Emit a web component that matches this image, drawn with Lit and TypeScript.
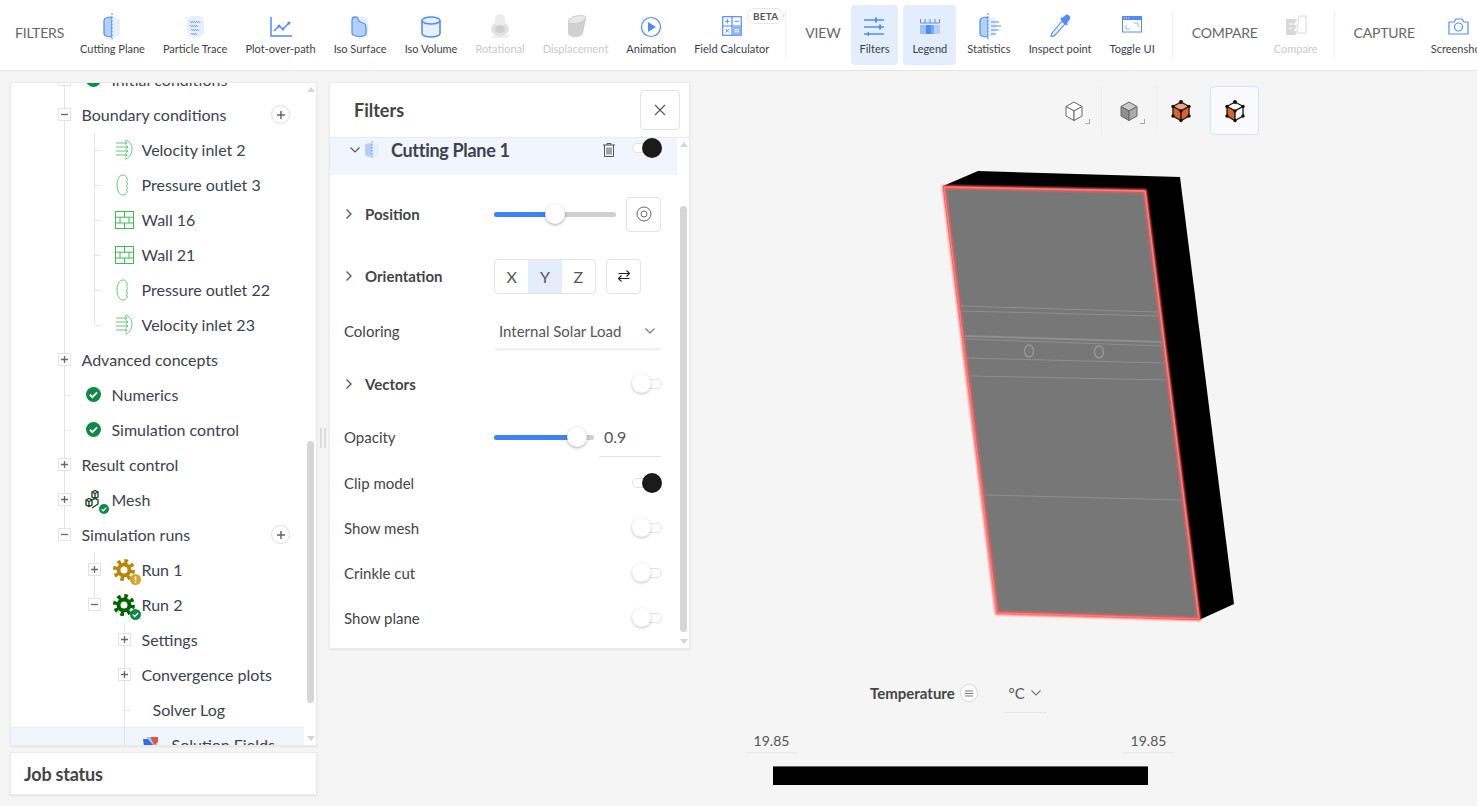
import { LitElement, html, css, svg } from "lit";
import { customElement } from "lit/decorators.js";

const B = "#4f8cf7";
const L = "#b5cffb";
const P = "#e6effe";

const cyl = (inner: any) => html`<svg width="28" height="30" viewBox="0 0 28 30">${inner}</svg>`;

const toolIcons: Record<string, any> = {
  cut: cyl(svg`<path d="M14 6c-5 0-8 1.500-8 3.500v13c0 2 3 3.500 8 3.500z" fill="${L}" stroke="${B}" stroke-width="1.200"/><path d="M14 6c5 0 8 1.500 8 3.500v13c0 2-3 3.500-8 3.500z" fill="${P}"/><path d="M14 2v27" stroke="${B}" stroke-width="1" stroke-dasharray="2 1.500"/>`),
  particle: cyl(svg`<rect x="6" y="5" width="17" height="21" rx="6" fill="${P}"/><path d="M9 11c1-2 1 2 2 0s1 2 2 0 1 2 2 0 1 2 2 0 1 2 2 0M9 15c1-2 1 2 2 0s1 2 2 0 1 2 2 0 1 2 2 0M10 19c1-2 1 2 2 0s1 2 2 0 1 2 2 0 1 2 2 0M10 23c1-2 1 2 2 0s1 2 2 0 1 2 2 0" fill="none" stroke="${B}" stroke-width=".9"/>`),
  plot: cyl(svg`<path d="M4 6v19h21" fill="none" stroke="${B}" stroke-width="1.500"/><path d="M7 20l5-5 4 3 6-6" fill="none" stroke="${B}" stroke-width="1.500"/><circle cx="12" cy="15" r="1.500" fill="${B}"/><circle cx="16" cy="18" r="1.500" fill="${B}"/><circle cx="22" cy="12" r="1.500" fill="${B}"/>`),
  isos: cyl(svg`<path d="M6 9c0-2 3-3.500 8-3.500s8 1.500 8 3.500v13c0 2-3 3.500-8 3.500s-8-1.500-8-3.500z" fill="${P}"/><path d="M6 9c0-4 6-4 6-1 0 2 2 3 5 4s3 3 3 6v5c-1 2-4 2.500-6 2.500-5 0-8-1.500-8-3.500z" fill="${L}" stroke="${B}" stroke-width="1.200"/>`),
  isov: cyl(svg`<path d="M5 9.500c0-2 4-3.500 9-3.500s9 1.500 9 3.500v13c0 2-4 3.500-9 3.500s-9-1.500-9-3.500z" fill="${P}" stroke="${B}" stroke-width="1.600"/><path d="M5 9.500c0 2 4 3.500 9 3.500s9-1.500 9-3.500" fill="none" stroke="${B}" stroke-width="1.600"/>`),
  rot: cyl(svg`<path d="M8 24h16l-3 3H5z" fill="#eee"/><ellipse cx="14" cy="18" rx="9" ry="7" fill="#e2e2e2"/><rect x="9" y="3" width="10" height="13" rx="5" fill="#ececec"/><ellipse cx="14" cy="18" rx="5" ry="4" fill="#cfcfcf"/>`),
  disp: cyl(svg`<path d="M6 9l13-4c3-.500 5 1 5 3l-3 14c-.500 2-3 4-8 4-4 0-7-1.500-7-4z" fill="#d0d0d0"/><ellipse cx="15" cy="8.500" rx="9" ry="3.500" transform="rotate(-14 15 8.500)" fill="#e8e8e8" stroke="#cfcfcf"/>`),
  anim: cyl(svg`<circle cx="14" cy="16" r="9.500" fill="#fff" stroke="${B}" stroke-width="1.200"/><path d="M11 11l8 5-8 5z" fill="${B}"/>`),
  calc: html`<svg width="20" height="20" viewBox="0 0 20 20"><rect x=".7" y=".7" width="18.600" height="18.600" fill="#fff" stroke="${B}" stroke-width="1.200"/><path d="M10 .7v18.600M.7 10h18.600" stroke="${B}" stroke-width="1.200"/><rect x="10" y="10" width="9.300" height="9.300" fill="#8fb6f9"/><path d="M3 5.300h4.500M5.300 3v4.500M12.500 5.300h4.500M3.500 13l3.500 3.500M7 13l-3.500 3.500" stroke="${B}" stroke-width="1"/><path d="M12.500 13.800h4.500M12.500 15.800h4.500" stroke="#fff" stroke-width="1"/></svg>`,
  filt: cyl(svg`<path d="M4 9h20M4 16h20M4 23h20" stroke="${B}" stroke-width="1.400"/><path d="M15 6.500h2v5h-2zM19 13.500h2v5h-2z" fill="${B}"/><path d="M9 20.500l-3 2.500 3 2.500z" fill="${B}"/>`),
  leg: cyl(svg`<path d="M4.500 8v4h19V8M9 8v4M14 8v4M19 8v4" fill="none" stroke="${B}" stroke-width="1"/><rect x="4" y="14" width="6" height="9" fill="#9dbffa"/><rect x="10" y="14" width="5" height="9" fill="${B}"/><rect x="15" y="14" width="3" height="9" fill="#7ba8f9"/><rect x="18" y="14" width="6" height="9" fill="${L}"/>`),
  stat: cyl(svg`<path d="M13 6c-5 0-8 1.500-8 3.500v13c0 2 3 3.500 8 3.500z" fill="${L}" stroke="${B}" stroke-width="1.200"/><path d="M13 6c4 0 7 1 8 3v14c-1 2-4 3-8 3z" fill="${P}"/><path d="M13 2v27" stroke="${B}" stroke-dasharray="2 1.500"/><path d="M16 11h8M16 15h10M16 19h8M16 23h5" stroke="${B}" stroke-width="1"/>`),
  insp: cyl(svg`<path d="M16 10l3 3-10 11c-1 1-3 1.500-4 1.500 0-1 .500-3 1.500-4z" fill="${P}" stroke="${B}" stroke-width="1.100"/><path d="M14.500 8.500l6 6 1.500-1.500-1-1 2.500-3c1.500-2 .500-3.500-.500-4.500s-2.500-1.500-4 0l-3 2.500-1-1z" fill="${B}"/>`),
  tog: cyl(svg`<rect x="4.500" y="5.500" width="19" height="15.500" fill="#fff" stroke="${B}" stroke-width="1"/><rect x="4" y="5" width="20" height="4" fill="${B}"/><path d="M6 7h1M8 7h1M10 7h1" stroke="#fff"/><path d="M8 14v4h4M16 12h4v4" fill="none" stroke="#8fb6f9"/>`),
  comp: cyl(svg`<path d="M4 8h11l-3 6h3l-3 6h3l-2 4H4z" fill="#d8d8d8"/><path d="M17 5h7v17H15z" fill="#fff" stroke="#d8d8d8"/><path d="M7 13h4M7 17h3M18 10h4M17 14h5" stroke="#fff"/>`),
  cam: cyl(svg`<path d="M5 11h5l2-3h6l2 3h4a1 1 0 0 1 0 0v12H5z" fill="#fff" stroke="${B}" stroke-width="1.200" stroke-linejoin="round"/><circle cx="14.500" cy="16" r="4" fill="none" stroke="${B}" stroke-width="1.200"/>`),
};

const G = "#62c878";
const velocity = html`<svg width="24" height="22" viewBox="0 0 24 22"><path d="M4 4h11M4 8h12M4 12h12M4 16h11M13 2.500l2 1.500-2 1.500M14 6.500l2 1.500-2 1.500M14 10.500l2 1.500-2 1.500M13 14.500l2 1.500-2 1.500" fill="none" stroke="${G}"/><path d="M13 1c5 1 7 5 7 9s-2 9-7 10" fill="none" stroke="${G}"/></svg>`;
const pressure = html`<svg width="24" height="22" viewBox="0 0 24 22"><path d="M11 1c-4 0-6 5-6 10s2 10 6 10c2 0 3-1 3.500-2l1-1-1-2 1-2-1-2 1-2.500-1-2 1-2-1-2.500C13.800 2 13 1 11 1z" fill="none" stroke="${G}"/></svg>`;
const wall = html`<svg width="24" height="22" viewBox="0 0 24 22"><rect x="3.500" y="2.500" width="18" height="17" fill="none" stroke="#3fbb55"/><path d="M3.500 8.200h18M3.500 14h18M12.500 2.500v5.700M8 8.200V14M17 8.200V14M12.500 14v5.500" stroke="#3fbb55" fill="none"/></svg>`;
const check = (size = 16) => html`<svg width=${size} height=${size} viewBox="0 0 16 16"><circle cx="8" cy="8" r="8" fill="#0f8a46"/><path d="M4.200 8.200l2.600 2.600 5-5" fill="none" stroke="#fff" stroke-width="2"/></svg>`;
const okIcon = html`<span class="ok">${check(15)}</span>`;
const mesh = html`<span class="badged"><svg width="22" height="22" viewBox="0 0 22 22"><path d="M9 3l3-1.500 3 1.500v5l-3 1.500L9 8zM9 3l3 1.500 3-1.500M12 4.500v5M3 11l3-1.500L9 11v5l-3 1.500L3 16zM3 11l3 1.500L9 11M6 12.500v5M9 11l3-1.500 3 1.500v4l-6 4" fill="none" stroke="#143d20" stroke-width="1.300"/></svg><i class="bdg">${check(10)}</i></span>`;
const gear = (c: string, badge: any) => html`<span class="badged"><svg width="22" height="22" viewBox="0 0 22 22"><circle cx="11" cy="11" r="9" fill="none" stroke=${c} stroke-width="4" stroke-dasharray="3.500 3.570"/><circle cx="11" cy="11" r="5.500" fill="none" stroke=${c} stroke-width="4"/></svg><i class="bdg big">${badge}</i></span>`;
const warn = html`<svg width="11" height="11" viewBox="0 0 16 16"><circle cx="8" cy="8" r="8" fill="#d4a42c"/><path d="M8 3.500v5.500M8 11v2" stroke="#fff" stroke-width="2.400"/></svg>`;
const sol = html`<svg width="18" height="18" viewBox="0 0 18 18"><path d="M1 3h7l4 7-3 7-7-7z" fill="#2f6fe0"/><path d="M8 1h8v5l-4 4z" fill="#e2563a"/><path d="M4 1h4l6 11-2 5-1-8z" fill="#a3c4f7"/><path d="M12 8l5 1-3 8h-3z" fill="#e58b55"/></svg>`;

type Row = { t: string; l: number; box?: string; icon?: any; add?: boolean; g: string[]; hl?: boolean };
const f1 = "g1";
const rows: Row[] = [
  { t: "Initial conditions", l: 1, box: "+", icon: okIcon, g: [f1] },
  { t: "Boundary conditions", l: 1, box: "-", add: true, g: [f1] },
  { t: "Velocity inlet 2", l: 2, icon: velocity, g: [f1, "g2", "t2"] },
  { t: "Pressure outlet 3", l: 2, icon: pressure, g: [f1, "g2", "t2"] },
  { t: "Wall 16", l: 2, icon: wall, g: [f1, "g2", "t2"] },
  { t: "Wall 21", l: 2, icon: wall, g: [f1, "g2", "t2"] },
  { t: "Pressure outlet 22", l: 2, icon: pressure, g: [f1, "g2", "t2"] },
  { t: "Velocity inlet 23", l: 2, icon: velocity, g: [f1, "g2 half", "t2"] },
  { t: "Advanced concepts", l: 1, box: "+", g: [f1] },
  { t: "Numerics", l: 1, icon: okIcon, g: [f1, "t1"] },
  { t: "Simulation control", l: 1, icon: okIcon, g: [f1, "t1"] },
  { t: "Result control", l: 1, box: "+", g: [f1] },
  { t: "Mesh", l: 1, box: "+", icon: mesh, g: [f1] },
  { t: "Simulation runs", l: 1, box: "-", add: true, g: ["g1 half"] },
  { t: "Run 1", l: 2, box: "+", icon: gear("#b8860b", warn), g: ["g2"] },
  { t: "Run 2", l: 2, box: "-", icon: gear("#006400", check(11)), g: ["g2 half"] },
  { t: "Settings", l: 3, box: "+", g: ["g3"] },
  { t: "Convergence plots", l: 3, box: "+", g: ["g3"] },
  { t: "Solver Log", l: 3, g: ["g3", "t3"] },
  { t: "Solution Fields", l: 3, icon: sol, g: ["g3", "t3"], hl: true },
];

const tools1 = [
  ["cut", "Cutting Plane"], ["particle", "Particle Trace"], ["plot", "Plot-over-path"], ["isos", "Iso Surface"],
  ["isov", "Iso Volume"], ["rot", "Rotational", "off"], ["disp", "Displacement", "off"], ["anim", "Animation"],
];

@customElement("app-root")
export class AppRoot extends LitElement {
  static styles = css`
    :host { display: block; width: 1477px; height: 806px; overflow: hidden; background: #f5f5f5; font-family: Lato, "Open Sans", sans-serif; color: #444; }
    svg { display: block; }
    .toolbar { height: 70px; background: #fff; border-bottom: 1px solid #e4e4e4; display: flex; align-items: flex-start; padding-left: 15px; box-sizing: content-box; white-space: nowrap; overflow: hidden; }
    .glabel { flex: none; font-size: 14px; line-height: 20px; margin-top: 23px; color: #666; letter-spacing: -.2px; }
    .tool { flex: none; position: relative; height: 60px; margin-top: 5px; padding: 0 9px; box-sizing: border-box; display: flex; flex-direction: column; align-items: center; border-radius: 4px; color: #3a3f4a; font-size: 11px; }
    .tool .ic { height: 30px; margin-top: 6px; display: flex; align-items: center; justify-content: center; }
    .tool .tx { line-height: 16px; margin-top: 0; }
    .tool.off { color: #c9c9c9; }
    .tool.on { background: #e3edfb; }
    .beta { position: absolute; top: 3px; right: -6px; height: 14px; padding: 0 5px; border: 1px solid #e6e6e6; border-radius: 8px; background: #fff; font-size: 10px; line-height: 14px; color: #555; font-weight: 700; letter-spacing: .2px; }
    .sep { flex: none; width: 1px; height: 48px; background: #eee; margin-top: 10px; }
    .main { display: flex; align-items: flex-start; padding: 11px 0 0 10px; }
    .left { flex: none; width: 307px; display: flex; flex-direction: column; gap: 6px; }
    .card { background: #fff; border: 1px solid #eaeaea; box-shadow: 0 1px 2px rgba(0,0,0,.08); box-sizing: border-box; }
    .tree-card { height: 664px; display: flex; overflow: hidden; }
    .tree { flex: none; width: 293px; height: 100%; overflow: hidden; }
    .tree-in { margin-top: -21px; }
    .row { position: relative; height: 35px; display: flex; align-items: center; box-sizing: border-box; font-size: 16px; color: #3c4250; white-space: nowrap; }
    .row.hl { background: #f1f5fd; box-shadow: inset 0 1px 0 #e3ebf8; }
    .box { flex: none; width: 24px; display: flex; position: relative; z-index: 1; }
    .box i { width: 11px; height: 11px; border: 1px solid #e2e2e2; background: #fff; display: flex; align-items: center; justify-content: center; font-style: normal; }
    .box svg { width: 7px; height: 7px; }
    .iconslot { flex: none; width: 30px; display: flex; }
    .iconslot > * { flex: none; }
    .ok { width: 24px; display: flex; justify-content: center; }
    .badged { position: relative; display: block; width: 24px; height: 22px; }
    .badged svg { margin-left: 1px; }
    .bdg { position: absolute; right: -3px; bottom: -3px; width: 10px; height: 10px; }
    .bdg svg { margin: 0; }
    .bdg.big { width: 11px; height: 11px; right: -5px; bottom: -4px; }
    .add { margin-left: auto; margin-right: 14px; width: 17px; height: 17px; border: 1px solid #dedede; border-radius: 50%; display: flex; align-items: center; justify-content: center; background: #fff; }
    .add svg { width: 8px; height: 8px; }
    .g { position: absolute; width: 1px; background: #e4e4e4; top: 0; bottom: 0; }
    .g1 { left: 53px; } .g2 { left: 83px; } .g3 { left: 113px; }
    .g.half { bottom: 50%; }
    .t { position: absolute; top: 50%; height: 1px; width: 6px; background: #e8e8e8; }
    .t1 { left: 54px; } .t2 { left: 84px; } .t3 { left: 114px; }
    .sb { flex: none; width: 13px; position: relative; display: flex; flex-direction: column; align-items: center; }
    .up, .down { position: absolute; width: 0; height: 0; border-left: 4px solid transparent; border-right: 4px solid transparent; }
    .up { top: 4px; border-bottom: 5px solid #d4d4d4; }
    .down { bottom: 4px; border-top: 5px solid #d4d4d4; }
    .thumb { width: 7px; background: #d6d6d6; border-radius: 4px; }
    .job { height: 43px; padding-left: 13px; font-size: 18px; font-weight: 700; color: #444; line-height: 42px; letter-spacing: -.2px; }
    .gutter { flex: none; width: 12px; height: 712px; display: flex; align-items: center; justify-content: center; gap: 2px; }
    .gutter i { width: 2px; height: 20px; background: #dcdcdc; }
    .panel { flex: none; width: 361px; height: 567px; display: flex; flex-direction: column; }
    .phead { flex: none; height: 55px; border-bottom: 1px solid #e6eaf2; display: flex; align-items: center; padding: 0 9px 0 24px; justify-content: space-between; box-sizing: border-box; }
    .phead h2 { margin: 0; font-size: 18px; font-weight: 700; color: #444; }
    .closeb { width: 40px; height: 40px; border: 1px solid #e2e2e2; border-radius: 4px; box-sizing: border-box; display: flex; align-items: center; justify-content: center; }
    .pbody { flex: 1; display: flex; min-height: 0; }
    .pmain { flex: none; width: 347px; }
    .cprow { height: 37px; background: #f1f5fd; display: flex; align-items: flex-start; padding: 0 15px 0 19px; box-sizing: border-box; }
    .cprow > * { height: 24px; display: flex; align-items: center; flex: none; }
    .cpchev { width: 15px; }
    .cpic { width: 27px; }
    .cpname { font-size: 18px; font-weight: 700; color: #3c4250; letter-spacing: -.3px; }
    .trash { margin-left: auto; margin-right: 16px; }
    .frow { display: flex; align-items: center; padding: 0 15px 0 14px; font-size: 15px; color: #444; }
    .h36 { height: 36px; } .h40 { height: 40px; } .h45 { height: 45px; }
    .pos { margin-top: 21px; } .ori { margin-top: 26px; } .col { margin-top: 19px; } .vec { margin-top: 17px; } .opa { margin-top: 15px; } .clip { margin-top: 3px; }
    .lab { flex: none; width: 150px; display: flex; align-items: center; }
    .lab b { font-weight: 700; }
    .lab svg { margin-right: 12px; margin-left: 1px; }
    .slider { position: relative; height: 5px; background: #cfcfcf; border-radius: 3px; flex: none; }
    .fill { height: 100%; background: #3f82f8; border-radius: 3px; }
    .knob { position: absolute; top: -8px; width: 20px; height: 20px; margin-left: -10px; background: #fff; border-radius: 50%; box-shadow: 0 1px 3px rgba(0,0,0,.35); }
    .s1 { width: 122px; } .s2 { width: 100px; }
    .ib { flex: none; width: 35px; height: 35px; border: 1px solid #e2e2e2; border-radius: 4px; box-sizing: border-box; margin-left: 10px; display: flex; align-items: center; justify-content: center; }
    .seg { flex: none; margin-left: 20px; width: 102px; height: 35px; border: 1px solid #e2e2e2; border-radius: 4px; box-sizing: border-box; display: flex; overflow: hidden; }
    .seg span { flex: 1; display: flex; align-items: center; justify-content: center; font-size: 16px; color: #555; }
    .seg .sel { background: #e3edfb; }
    .select { flex: none; width: 167px; height: 36px; box-sizing: border-box; padding: 0 5px; display: flex; align-items: center; justify-content: space-between; border-bottom: 1px solid #eef3fc; box-shadow: 0 2px 2px -1px #dfe9fb; white-space: nowrap; color: #555; }
    .spacer { flex: 1; }
    .tgl { position: relative; flex: none; width: 30px; height: 20px; }
    .tgl .tr { position: absolute; top: 5px; height: 10px; box-sizing: border-box; border: 1px solid #e2e2e2; border-radius: 5px; background: #fff; left: 0; right: 0; }
    .tgl .kn { position: absolute; top: 0; width: 20px; height: 20px; border-radius: 50%; }
    .tgl.on .kn { right: 0; background: #1b1b1b; }
    .tgl.off .kn { left: 0; width: 19px; height: 19px; background: #fff; box-shadow: 0 1px 3px rgba(0,0,0,.25); }
    .numinput { flex: none; width: 62px; height: 40px; margin-left: 5px; box-sizing: border-box; padding-left: 5px; border-bottom: 1px solid #e4e4e4; display: flex; align-items: center; font-size: 16px; color: #555; }
    .viewer { flex: none; margin-left: 55px; width: 520px; margin-top: -11px; padding-top: 15px; display: flex; flex-direction: column; }
    .vtools { display: flex; justify-content: flex-end; align-items: center; height: 49px; width: 514px; }
    .vt { position: relative; height: 49px; box-sizing: border-box; display: flex; align-items: center; justify-content: center; }
    .vt.sel { width: 49px; border: 1px solid #d3e1fb; border-radius: 4px; background: #f9fafc; }
    .vt.w1 { width: 55px; border-right: 1px solid #eee; }
    .vt.w2 { width: 48px; margin-right: 5px; }
    .corner { position: absolute; right: 11px; bottom: 11px; width: 4px; height: 4px; border-right: 1px solid #aaa; border-bottom: 1px solid #aaa; }
    .model { margin: 25px 0 0 185px; width: 320px; height: 480px; flex: none; }
    .legend { width: 430px; margin-top: 33px; }
    .lhead { display: flex; align-items: center; height: 40px; padding-left: 125px; }
    .lhead b { font-size: 15px; font-weight: 700; color: #444; }
    .info { width: 16px; height: 16px; border: 1px solid #d8d8d8; border-radius: 50%; margin-left: 5px; display: flex; align-items: center; justify-content: center; background: #fff; }
    .unit { margin-left: 26px; width: 43px; height: 40px; box-sizing: border-box; border-bottom: 1px solid #e6e6e6; display: flex; align-items: center; justify-content: center; gap: 5px; font-size: 15px; color: #555; }
    .vals { display: flex; justify-content: space-between; margin-top: 18px; }
    .vals span { width: 53px; height: 21px; border-bottom: 1px solid #e8e8e8; text-align: center; font-size: 14px; line-height: 20px; color: #555; }
    .bar { height: 19px; margin: 13px 27px 0 28px; background: #000; border-top: 1px solid #666; box-sizing: border-box; }
  `;

  tool(ic: string, label: string, cls = "") {
    return html`<div class="tool ${cls}"><div class="ic">${toolIcons[ic]}</div><div class="tx">${label}</div></div>`;
  }
  toggle(on: boolean) {
    return html`<div class="tgl ${on ? "on" : "off"}"><div class="tr"></div><div class="kn"></div></div>`;
  }
  chevR() {
    return html`<svg width="8" height="12" viewBox="0 0 8 12"><path d="M1.500 1.500L6 6l-4.500 4.500" fill="none" stroke="#555" stroke-width="1.300"/></svg>`;
  }
  chevD(c = "#666") {
    return html`<svg width="12" height="8" viewBox="0 0 12 8"><path d="M1.500 1.500L6 6l4.500-4.500" fill="none" stroke=${c} stroke-width="1.100"/></svg>`;
  }
  slider(cls: string, pct: number) {
    return html`<div class="slider ${cls}"><div class="fill" style="width:${pct}%"></div><div class="knob" style="left:${pct}%"></div></div>`;
  }
  cube(fill1: string, fill2: string, fill3: string, dots: boolean, thin = false) {
    const sw = thin ? 1 : 1.4;
    const col = thin ? "#666" : "#222";
    return html`<svg width="26" height="26" viewBox="0 0 26 26">
      <path d="M13 4l8 4.500-8 4.500-8-4.500z" fill=${fill1} stroke=${col} stroke-width=${sw}/>
      <path d="M5 8.500l8 4.500v9.500l-8-4.500z" fill=${fill2} stroke=${col} stroke-width=${sw}/>
      <path d="M21 8.500L13 13v9.500l8-4.500z" fill=${fill3} stroke=${col} stroke-width=${sw}/>
      ${dots ? svg`<g fill="#111"><circle cx="13" cy="4" r="2"/><circle cx="21" cy="8.500" r="1.700"/><circle cx="5" cy="8.500" r="1.700"/><circle cx="13" cy="13" r="1.700"/><circle cx="5" cy="18" r="1.700"/><circle cx="21" cy="18" r="1.700"/><circle cx="13" cy="22.500" r="1.700"/></g>` : ""}
    </svg>`;
  }
  tree() {
    const plus = html`<svg viewBox="0 0 7 7"><path d="M0 3.500h7M3.500 0v7" stroke="#666" stroke-width="1.300"/></svg>`;
    const minus = html`<svg viewBox="0 0 7 7"><path d="M0 3.500h7" stroke="#666" stroke-width="1.300"/></svg>`;
    return rows.map((r) => html`
      <div class="row ${r.hl ? "hl" : ""}" style="padding-left:${46.5 + (r.l - 1) * 30 + (r.box || r.icon ? 0 : 11)}px">
        ${r.g.map((g) => html`<div class="${g.startsWith("t") ? "t" : "g"} ${g}"></div>`)}
        <div class="box">${r.box ? html`<i>${r.box === "+" ? plus : minus}</i>` : ""}</div>
        ${r.icon ? html`<div class="iconslot">${r.icon}</div>` : ""}
        <span>${r.t}</span>
        ${r.add ? html`<div class="add">${plus}</div>` : ""}
      </div>`);
  }
  render() {
    return html`
      <div class="toolbar">
        <div class="glabel" style="margin-right:7px">FILTERS</div>
        ${tools1.map(([i, t, c]) => this.tool(i, t, c || ""))}
        <div class="tool"><div class="beta">BETA</div><div class="ic">${toolIcons.calc}</div><div class="tx">Field Calculator</div></div>
        <div class="sep" style="margin-left:7px"></div>
        <div class="glabel" style="margin:23px 10px 0 19px">VIEW</div>
        ${this.tool("filt", "Filters", "on")}
        <div style="width:5px;flex:none"></div>
        ${this.tool("leg", "Legend", "on")}
        <div style="width:2px;flex:none"></div>
        ${this.tool("stat", "Statistics")}
        ${this.tool("insp", "Inspect point")}
        ${this.tool("tog", "Toggle UI")}
        <div class="sep" style="margin-left:8px"></div>
        <div class="glabel" style="margin:23px 7px 0 19px">COMPARE</div>
        ${this.tool("comp", "Compare", "off")}
        <div class="sep" style="margin-left:7px"></div>
        <div class="glabel" style="margin:23px 7px 0 19px">CAPTURE</div>
        ${this.tool("cam", "Screenshot")}
      </div>
      <div class="main">
        <div class="left">
          <div class="card tree-card">
            <div class="tree"><div class="tree-in">${this.tree()}</div></div>
            <div class="sb"><div class="up"></div><div class="thumb" style="margin-top:358px;height:262px"></div><div class="down"></div></div>
          </div>
          <div class="card job">Job status</div>
        </div>
        <div class="gutter"><i></i><i></i></div>
        <div class="card panel">
          <div class="phead">
            <h2>Filters</h2>
            <div class="closeb"><svg width="12" height="12" viewBox="0 0 12 12"><path d="M1 1l10 10M11 1L1 11" stroke="#555" stroke-width="1.100"/></svg></div>
          </div>
          <div class="pbody">
            <div class="pmain">
              <div class="cprow">
                <div class="cpchev">${this.chevD("#555")}</div>
                <div class="cpic"><svg width="16" height="20" viewBox="0 0 16 20"><path d="M8 3C4 3 1 4 1 5.500v9C1 16 4 17 8 17z" fill="${L}"/><path d="M8 3c4 0 7 1 7 2.500v9c0 1.500-3 2.500-7 2.500z" fill="${P}"/><path d="M8 1v18" stroke="${B}" stroke-dasharray="1.500 1.500"/></svg></div>
                <div class="cpname">Cutting Plane 1</div>
                <div class="trash"><svg width="14" height="16" viewBox="0 0 14 16"><path d="M1 3h12M5 3V1.500h4V3M2.500 3v11.500h9V3M5 5.500v7M7 5.500v7M9 5.500v7" fill="none" stroke="#555" stroke-width="1"/></svg></div>
                ${this.toggle(true)}
              </div>
              <div class="frow h36 pos">
                <div class="lab">${this.chevR()}<b>Position</b></div>
                ${this.slider("s1", 50)}
                <div class="ib"><svg width="16" height="16" viewBox="0 0 16 16"><circle cx="8" cy="8" r="7" fill="none" stroke="#666"/><circle cx="8" cy="8" r="3" fill="none" stroke="#666"/></svg></div>
              </div>
              <div class="frow h36 ori">
                <div class="lab" style="width:130px">${this.chevR()}<b>Orientation</b></div>
                <div class="seg"><span>X</span><span class="sel">Y</span><span>Z</span></div>
                <div class="ib"><svg width="14" height="14" viewBox="0 0 14 14"><path d="M1.500 4.500h11M9.500 1.500l3 3-3 3M12.500 9.500h-11M4.500 6.500l-3 3 3 3" fill="none" stroke="#222" stroke-width="1.100"/></svg></div>
              </div>
              <div class="frow h36 col">
                <div class="lab">Coloring</div>
                <div class="select"><span>Internal Solar Load</span>${this.chevD("#777")}</div>
              </div>
              <div class="frow h36 vec">
                <div class="lab">${this.chevR()}<b>Vectors</b></div>
                <div class="spacer"></div>
                ${this.toggle(false)}
              </div>
              <div class="frow h40 opa">
                <div class="lab">Opacity</div>
                ${this.slider("s2", 83)}
                <div class="numinput">0.9</div>
              </div>
              <div class="frow h45 clip"><div class="lab">Clip model</div><div class="spacer"></div>${this.toggle(true)}</div>
              <div class="frow h45"><div class="lab">Show mesh</div><div class="spacer"></div>${this.toggle(false)}</div>
              <div class="frow h45"><div class="lab">Crinkle cut</div><div class="spacer"></div>${this.toggle(false)}</div>
              <div class="frow h45"><div class="lab">Show plane</div><div class="spacer"></div>${this.toggle(false)}</div>
            </div>
            <div class="sb"><div class="up"></div><div class="thumb" style="margin-top:68px;height:426px"></div><div class="down"></div></div>
          </div>
        </div>
        <div class="viewer">
          <div class="vtools">
            <div class="vt w1">${this.cube("#fff", "#fff", "#fff", false, true)}<div class="corner"></div></div>
            <div class="vt w1">${this.cube("#c9c9c9", "#8f8f8f", "#aaa", false, true)}<div class="corner"></div></div>
            <div class="vt w2">${this.cube("#f2a27c", "#e0602a", "#e0602a", true)}</div>
            <div class="vt sel">${this.cube("#fff", "#e0602a", "#fff", true)}</div>
          </div>
          <svg class="model" viewBox="930 160 320 480">
            <defs><filter id="glow" x="-5%" y="-5%" width="110%" height="110%"><feGaussianBlur stdDeviation="1.200"/></filter></defs>
            <path d="M943 186L978 171 1180 177 1234 604 1199 620 997 613z" fill="#000"/>
            <path d="M944 187L1145 191 1199 619 997 613z" fill="#777"/>
            <g fill="none" stroke="#8f8f8f" stroke-width="1">
              <path d="M961 306L1158 312M962 311L1158 316M966 358L1164 363M970 376L1166 380M985 495L1181 500M965 339L1162 346"/>
              <path d="M965 336L1162 342" stroke-width="2"/>
              <ellipse cx="1029" cy="351" rx="4.500" ry="6" stroke="#999" stroke-width="1.300"/>
              <ellipse cx="1099" cy="352" rx="4.500" ry="6" stroke="#999" stroke-width="1.300"/>
            </g>
            <path d="M944 187L1145 191 1199 619 997 613z" fill="none" stroke="#ff5a5a" stroke-width="3.500" filter="url(#glow)"/>
            <path d="M944 187L1145 191 1199 619 997 613z" fill="none" stroke="#ff7a7a" stroke-width="1.500" stroke-linejoin="round"/>
          </svg>
          <div class="legend">
            <div class="lhead">
              <b>Temperature</b>
              <div class="info"><svg width="8" height="7" viewBox="0 0 8 7"><path d="M0 1h8M0 3.500h8M0 6h8" stroke="#777"/></svg></div>
              <div class="unit"><span>°C</span>${this.chevD("#777")}</div>
            </div>
            <div class="vals"><span>19.85</span><span>19.85</span></div>
            <div class="bar"></div>
          </div>
        </div>
      </div>
    `;
  }
}
